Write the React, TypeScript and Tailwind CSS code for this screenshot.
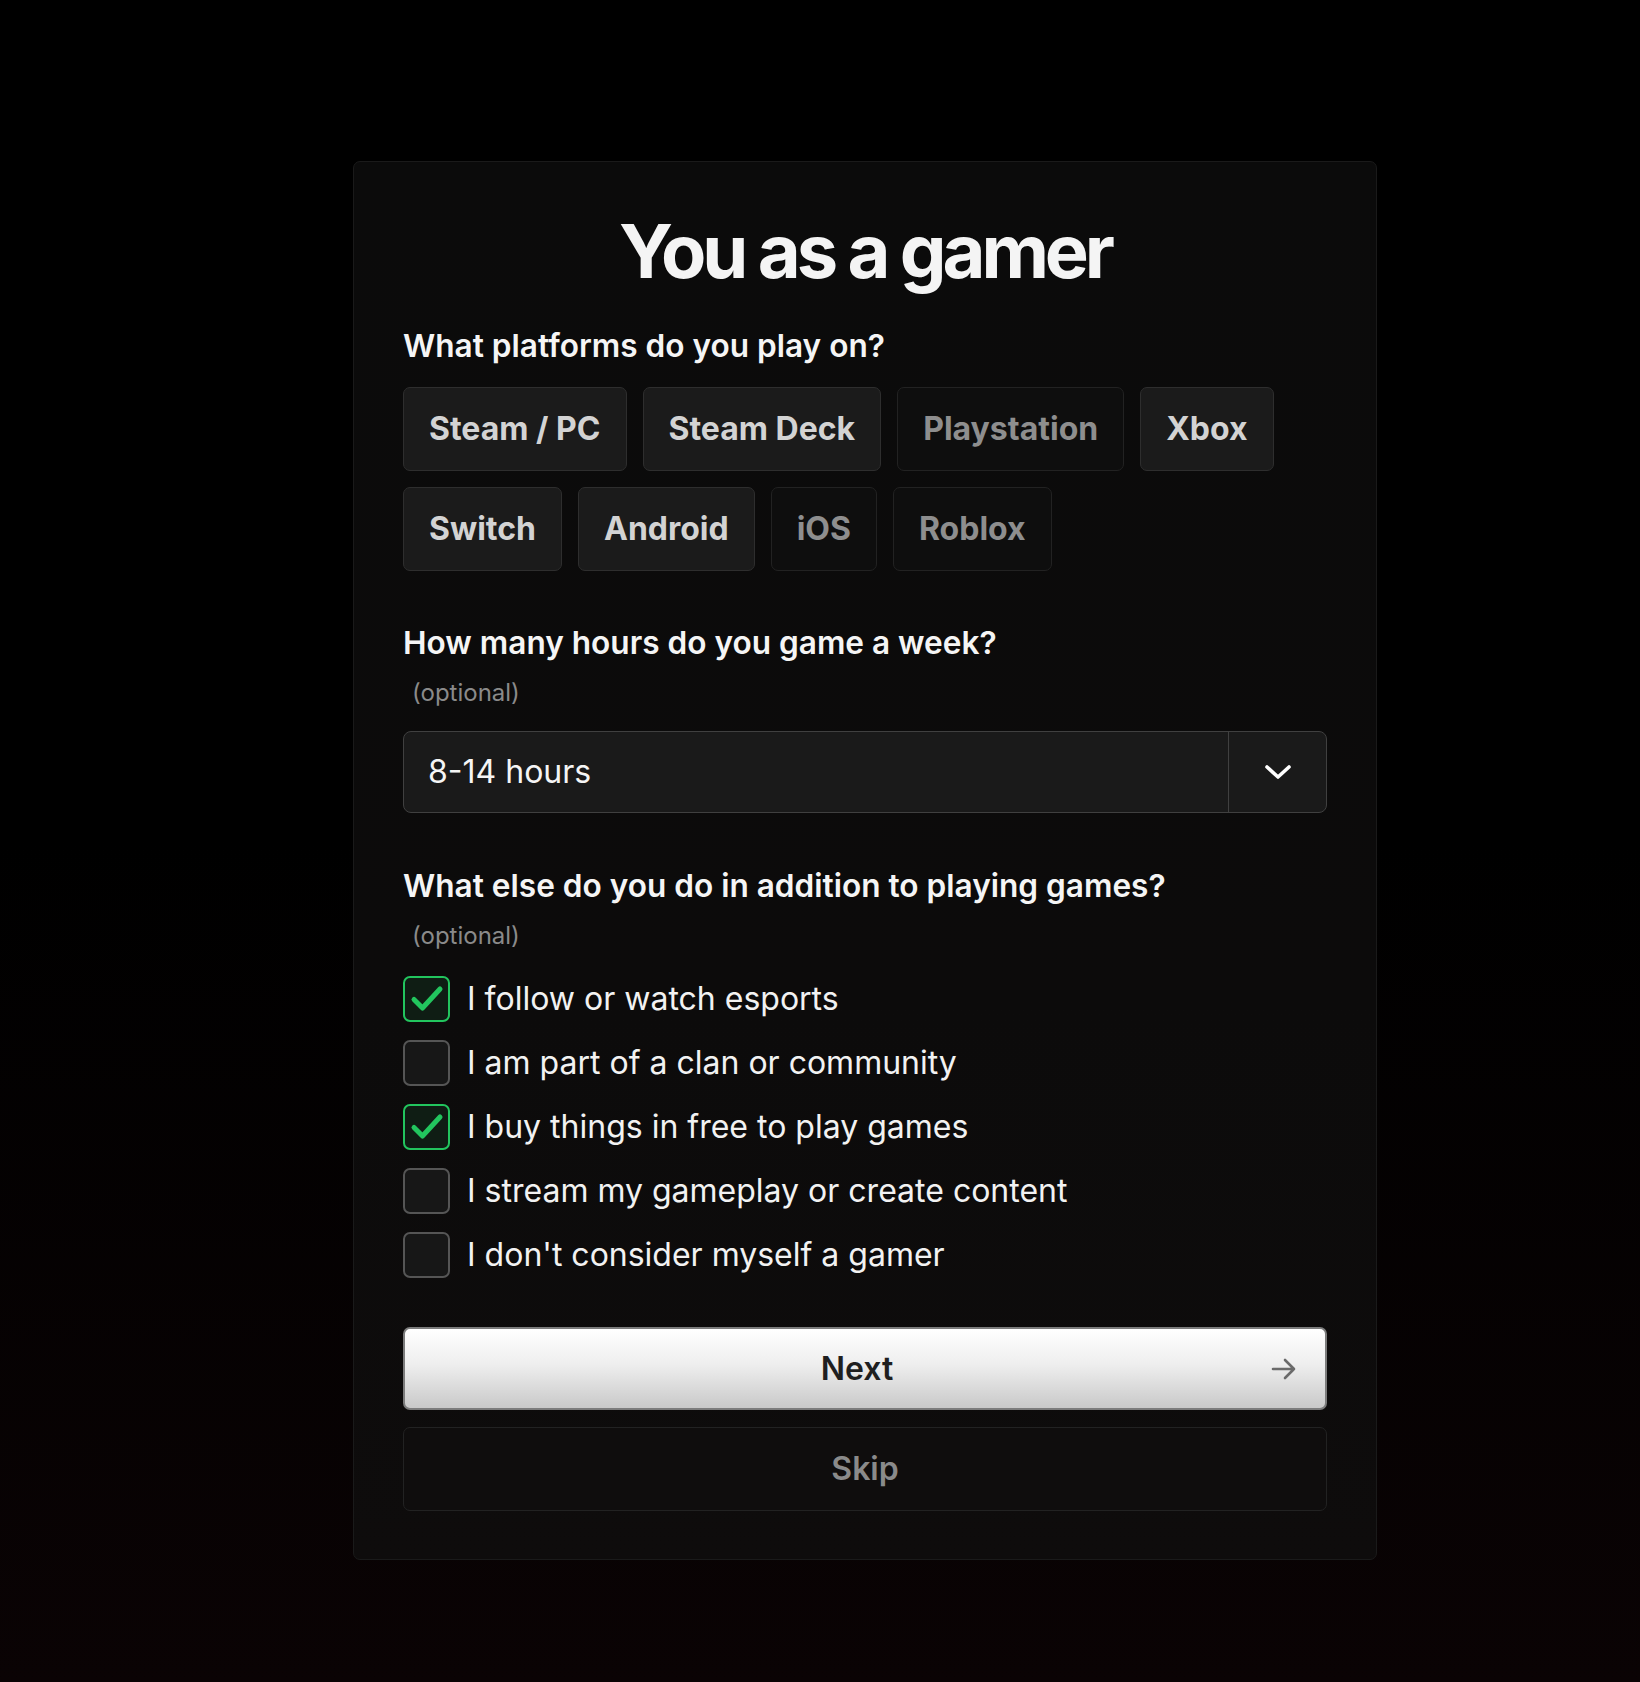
import { useState } from "react";

type Platform = { label: string; selected: boolean };

const platforms: Platform[] = [
  { label: "Steam / PC", selected: true },
  { label: "Steam Deck", selected: true },
  { label: "Playstation", selected: false },
  { label: "Xbox", selected: true },
  { label: "Switch", selected: true },
  { label: "Android", selected: true },
  { label: "iOS", selected: false },
  { label: "Roblox", selected: false },
];

const activities = [
  { label: "I follow or watch esports", checked: true },
  { label: "I am part of a clan or community", checked: false },
  { label: "I buy things in free to play games", checked: true },
  { label: "I stream my gameplay or create content", checked: false },
  { label: "I don't consider myself a gamer", checked: false },
];

function Optional() {
  return <p className="mt-[18px] pl-[9px] text-[24px] leading-[28px] text-[#8a8a8a]">(optional)</p>;
}

export default function App() {
  const [selected, setSelected] = useState(platforms.map((p) => p.selected));
  const [checked, setChecked] = useState(activities.map((a) => a.checked));

  return (
    <div className="min-h-[1682px] w-full bg-[linear-gradient(180deg,#000_0%,#000_50%,#0a0304_100%)] pt-[161px] font-['Inter',sans-serif]">
      <div className="ml-[353px] w-[1024px] rounded-[7px] border border-[#1a1a1a] bg-[linear-gradient(180deg,#0b0b0b_0%,#0c0b0b_60%,#0e0c0c_100%)] px-[49px] pb-[48px] pt-[53px]">
        <h1 className="text-center text-[74px] font-bold leading-[72px] tracking-[-0.055em] text-[#f4f4f4]">
          You as a gamer
        </h1>

        <h2 className="mt-[41px] text-[31.6px] font-semibold leading-[36px] text-[#f5f5f5]">
          What platforms do you play on?
        </h2>
        <div className="mt-[23px] flex flex-wrap gap-4">
          {platforms.map((p, i) => (
            <button
              key={p.label}
              type="button"
              onClick={() => setSelected((prev) => prev.map((v, j) => (j === i ? !v : v)))}
              className={
                selected[i]
                  ? "rounded-[7px] border border-[#2e2e2e] bg-[#1b1b1b] px-[25px] py-[21px] text-[32px] font-bold leading-[40px] text-[#d3d3d3]"
                  : "rounded-[7px] border border-[#222] bg-[#0e0e0e] px-[25px] py-[21px] text-[32px] font-bold leading-[40px] text-[#8e8e8e]"
              }
            >
              {p.label}
            </button>
          ))}
        </div>

        <h2 className="mt-[54px] text-[31.6px] font-semibold leading-[36px] text-[#f5f5f5]">
          How many hours do you game a week?
        </h2>
        <Optional />
        <div className="mt-[24px] flex h-[82px] items-stretch rounded-[8px] border border-[#404040] bg-[#1a1a1a]">
          <div className="flex flex-1 items-center pl-[24px] text-[32px] leading-[36px] text-[#f5f5f5]">8-14 hours</div>
          <div className="flex w-[98px] items-center justify-center border-l border-[#404040]">
            <svg width="28" height="16" viewBox="0 0 28 16" fill="none">
              <path d="M3 3l11 10L25 3" stroke="#fff" strokeWidth="3.6" strokeLinecap="round" strokeLinejoin="round" />
            </svg>
          </div>
        </div>

        <h2 className="mt-[55px] text-[31.6px] font-semibold leading-[36px] text-[#f5f5f5]">
          What else do you do in addition to playing games?
        </h2>
        <Optional />
        <div className="mt-[26px] flex flex-col gap-[18px]">
          {activities.map((a, i) => (
            <label
              key={a.label}
              className="flex cursor-pointer items-center gap-[17px]"
              onClick={() => setChecked((prev) => prev.map((v, j) => (j === i ? !v : v)))}
            >
              <span
                className={
                  checked[i]
                    ? "flex h-[46px] w-[47px] items-center justify-center rounded-[7px] border-2 border-[#22c55e] bg-[#0f1d14]"
                    : "flex h-[46px] w-[47px] items-center justify-center rounded-[7px] border-2 border-[#555] bg-[#171717]"
                }
              >
                {checked[i] ? (
                  <svg width="36" height="30" viewBox="0 0 36 30" fill="none">
                    <path d="M5 15.5l8.5 8.5L31 5" stroke="#22c55e" strokeWidth="5" strokeLinecap="round" strokeLinejoin="round" />
                  </svg>
                ) : null}
              </span>
              <span className="text-[32px] leading-[40px] text-[#f2f2f2]">{a.label}</span>
            </label>
          ))}
        </div>

        <button
          type="button"
          className="mt-[49px] flex h-[83px] w-full items-center rounded-[7px] border-2 border-[#7c7c7c] bg-[linear-gradient(180deg,#ffffff_0%,#eeeeee_45%,#c9c9c9_100%)] pl-[38px] pr-[28px]"
        >
          <span className="flex-1 text-center text-[32px] font-semibold leading-[40px] text-[#1f1f1f]">Next</span>
          <svg width="26" height="26" viewBox="0 0 26 26" fill="none">
            <path d="M2 13h21M14 4l9 9-9 9" stroke="#6a6a6a" strokeWidth="2.6" strokeLinecap="round" strokeLinejoin="round" />
          </svg>
        </button>
        <button
          type="button"
          className="mt-[17px] flex h-[84px] w-full items-center justify-center rounded-[7px] border border-[#222] bg-[#0f0d0d] text-[32px] font-semibold leading-[40px] text-[#8a8a8a]"
        >
          Skip
        </button>
      </div>
    </div>
  );
}
